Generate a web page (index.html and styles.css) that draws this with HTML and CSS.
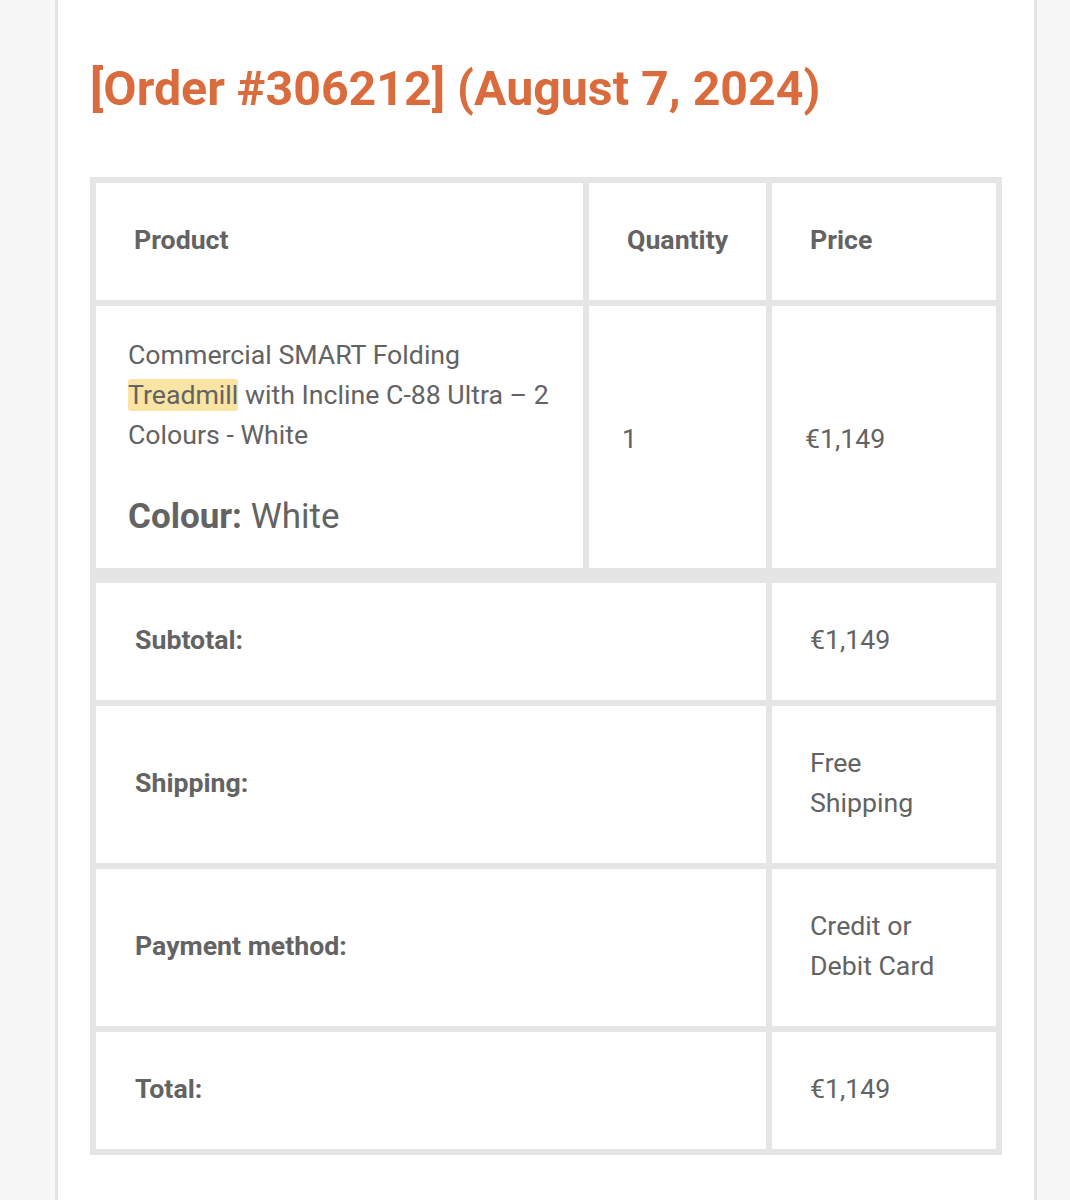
FILE: index.html
```html
<!DOCTYPE html>
<html lang="en">
<head>
<meta charset="utf-8">
<title>Order #306212</title>
<link rel="stylesheet" href="styles.css">
</head>
<body>
<div class="page">
  <div class="card">
    <h2 class="order-title">[Order #306212] (August 7, 2024)</h2>
    <table class="order-table">
      <thead>
        <tr>
          <th class="c-product">Product</th>
          <th class="c-qty">Quantity</th>
          <th class="c-price">Price</th>
        </tr>
      </thead>
      <tbody>
        <tr>
          <td class="item-name">
            <div class="item-title">Commercial SMART Folding <span class="hl">Treadmill</span> with Incline C-88 Ultra – 2 Colours - White</div>
            <div class="item-meta"><strong>Colour:</strong> White</div>
          </td>
          <td class="item-num">1</td>
          <td class="item-num">€1,149</td>
        </tr>
      </tbody>
      <tfoot>
        <tr class="first">
          <th colspan="2">Subtotal:</th>
          <td>€1,149</td>
        </tr>
        <tr>
          <th colspan="2">Shipping:</th>
          <td>Free Shipping</td>
        </tr>
        <tr>
          <th colspan="2">Payment method:</th>
          <td>Credit or Debit Card</td>
        </tr>
        <tr>
          <th colspan="2">Total:</th>
          <td>€1,149</td>
        </tr>
      </tfoot>
    </table>
  </div>
</div>
</body>
</html>
```

FILE: styles.css
```css
html, body {
  margin: 0;
  padding: 0;
  background: #f7f7f7;
}

body {
  font-family: Roboto, "Noto Sans", Arial, sans-serif;
  color: #636363;
}

.page {
  padding: 0 33px 0 55px;
  min-height: 1200px;
  display: flex;
}

.card {
  flex: 1;
  background: #ffffff;
  border-left: 3px solid #e4e4e4;
  border-right: 3px solid #e4e4e4;
  padding: 58px 32px 60px;
}

.order-title {
  margin: 0 0 58px;
  font-size: 48.3px;
  line-height: 61px;
  font-weight: 700;
  color: #d96b3c;
}

.order-table {
  width: 912px;
  table-layout: fixed;
  border-collapse: separate;
  border-spacing: 0;
  border: 3px solid #e5e5e5;
}

.order-table th,
.order-table td {
  box-sizing: border-box;
  border: 3px solid #e5e5e5;
  font-size: 26.7px;
  line-height: 40px;
  color: #636363;
  text-align: left;
  vertical-align: middle;
}

.order-table th {
  font-weight: 700;
}

.order-table thead th {
  padding: 37px 16px 40px 38px;
}

.c-product { width: 493px; }
.c-qty { width: 183px; }
.c-price { width: 230px; }

.order-table tbody td {
  padding: 29px 16px 26px 33px;
  font-weight: 400;
}

.order-table tbody td.item-name {
  padding-left: 32px;
  padding-right: 12px;
}

.hl {
  background: #f9e4a3;
  border-radius: 3px;
}

.item-meta {
  margin-top: 37px;
  font-size: 35px;
  line-height: 50px;
}

.item-meta strong {
  font-weight: 700;
}

.order-table tfoot th {
  padding: 37px 16px 40px 39px;
}

.order-table tfoot td {
  padding: 37px 36px 40px 38px;
  font-weight: 400;
}

.order-table tfoot tr.first th,
.order-table tfoot tr.first td {
  border-top-width: 12px;
}
```
